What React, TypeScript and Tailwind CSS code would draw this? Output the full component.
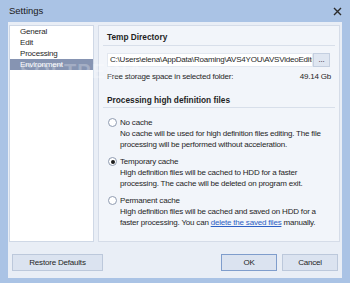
export default function App() {
  const Radio = ({ checked }: { checked?: boolean }) => (
    <span className="w-[9px] h-[9px] rounded-full border border-[#8f9bb0] bg-white flex items-center justify-center shrink-0">
      {checked && <span className="w-[4px] h-[4px] rounded-full bg-[#1c1c1c]" />}
    </span>
  );
  return (
    <div className="w-[350px] h-[283px] bg-[#aac3e5] flex flex-col font-['Liberation_Sans',Arial,sans-serif] text-[#1f1f1f] relative overflow-hidden">
      <div className="h-[22px] flex items-center justify-between pl-[9px] pr-[8px] shrink-0">
        <span className="text-[9.5px] text-[#1a1a1a]">Settings</span>
        <svg width="9" height="9" viewBox="0 0 9 9">
          <path d="M1 1L8 8M8 1L1 8" stroke="#2b2b2b" strokeWidth="1.4" />
        </svg>
      </div>
      <div className="flex-1 mx-[8px] mb-[5px] bg-[#e9eef6] flex flex-col">
        <div className="flex gap-[4px] pt-[3px] pl-[1px] h-[220px] shrink-0">
          <div className="w-[85px] h-full bg-white border border-[#cfd8e6] flex flex-col text-[8px] tracking-[-0.2px]">
            <div className="h-[11px] leading-[11px] pl-[10px]">General</div>
            <div className="h-[11px] leading-[11px] pl-[10px]">Edit</div>
            <div className="h-[11px] leading-[11px] pl-[10px]">Processing</div>
            <div className="h-[11px] leading-[11px] pl-[10px] bg-[#8694b2] text-white">Environment</div>
          </div>
          <div className="w-[242px] h-full bg-[#f2f5fa] border border-[#d5dce8] flex flex-col text-[8px] tracking-[-0.2px]">
            <div className="mt-[5px] h-[12px] leading-[12px] pl-[8px] font-bold text-[8.3px] tracking-normal">Temp Directory</div>
            <div className="mt-[2px] h-[1px] mx-[4px] bg-[#d8dfea]" />
            <div className="mt-[7px] h-[14px] pl-[8px] flex">
              <div className="w-[206px] h-full bg-white border border-[#e3e8f0] pl-[2px] leading-[12px] whitespace-nowrap overflow-hidden">
                {"C:\\Users\\elena\\AppData\\Roaming\\AVS4YOU\\AVSVideoEditor"}
              </div>
              <div className="w-[17px] h-full bg-[#dfe6f1] border border-[#c4cfe0] flex items-center justify-center leading-[12px]">...</div>
            </div>
            <div className="mt-[5px] h-[10px] leading-[10px] px-[8px] flex justify-between">
              <span>Free storage space in selected folder:</span>
              <span>49.14 Gb</span>
            </div>
            <div className="mt-[12px] h-[12px] leading-[12px] pl-[8px] font-bold text-[8.3px] tracking-normal">Processing high definition files</div>
            <div className="mt-[1px] h-[1px] mx-[4px] bg-[#d8dfea]" />

            <div className="mt-[9px] h-[11px] pl-[9px] flex items-center gap-[3px]">
              <Radio />
              <span className="leading-[11px]">No cache</span>
            </div>
            <div className="pl-[21px] leading-[11px]">
              <div>No cache will be used for high definition files editing. The file</div>
              <div>processing will be performed without acceleration.</div>
            </div>

            <div className="mt-[6px] h-[11px] pl-[9px] flex items-center gap-[3px]">
              <Radio checked />
              <span className="leading-[11px]">Temporary cache</span>
            </div>
            <div className="pl-[21px] leading-[11px]">
              <div>High definition files will be cached to HDD for a faster</div>
              <div>processing. The cache will be deleted on program exit.</div>
            </div>

            <div className="mt-[6px] h-[11px] pl-[9px] flex items-center gap-[3px]">
              <Radio />
              <span className="leading-[11px]">Permanent cache</span>
            </div>
            <div className="pl-[21px] leading-[11px]">
              <div>High definition files will be cached and saved on HDD for a</div>
              <div>
                faster processing. You can{" "}
                <span className="text-[#2d5fc4] underline">delete the saved files</span> manually.
              </div>
            </div>
          </div>
        </div>
        <div className="mt-[12px] h-[17px] flex justify-between px-[4px] text-[8px] tracking-[-0.2px]">
          <div className="w-[91px] h-full bg-[#dbe3f0] border border-[#bcc8db] flex items-center justify-center">Restore Defaults</div>
          <div className="flex gap-[5px]">
            <div className="w-[56px] h-full bg-[#dbe3f0] border border-[#7f9dcc] flex items-center justify-center">OK</div>
            <div className="w-[56px] h-full bg-[#dbe3f0] border border-[#bcc8db] flex items-center justify-center">Cancel</div>
          </div>
        </div>
      </div>
      <span className="absolute left-[20px] top-[56px] text-[20px] font-bold tracking-[1px] text-white/25 pointer-events-none select-none">SOFTPEDIA</span>
    </div>
  );
}
